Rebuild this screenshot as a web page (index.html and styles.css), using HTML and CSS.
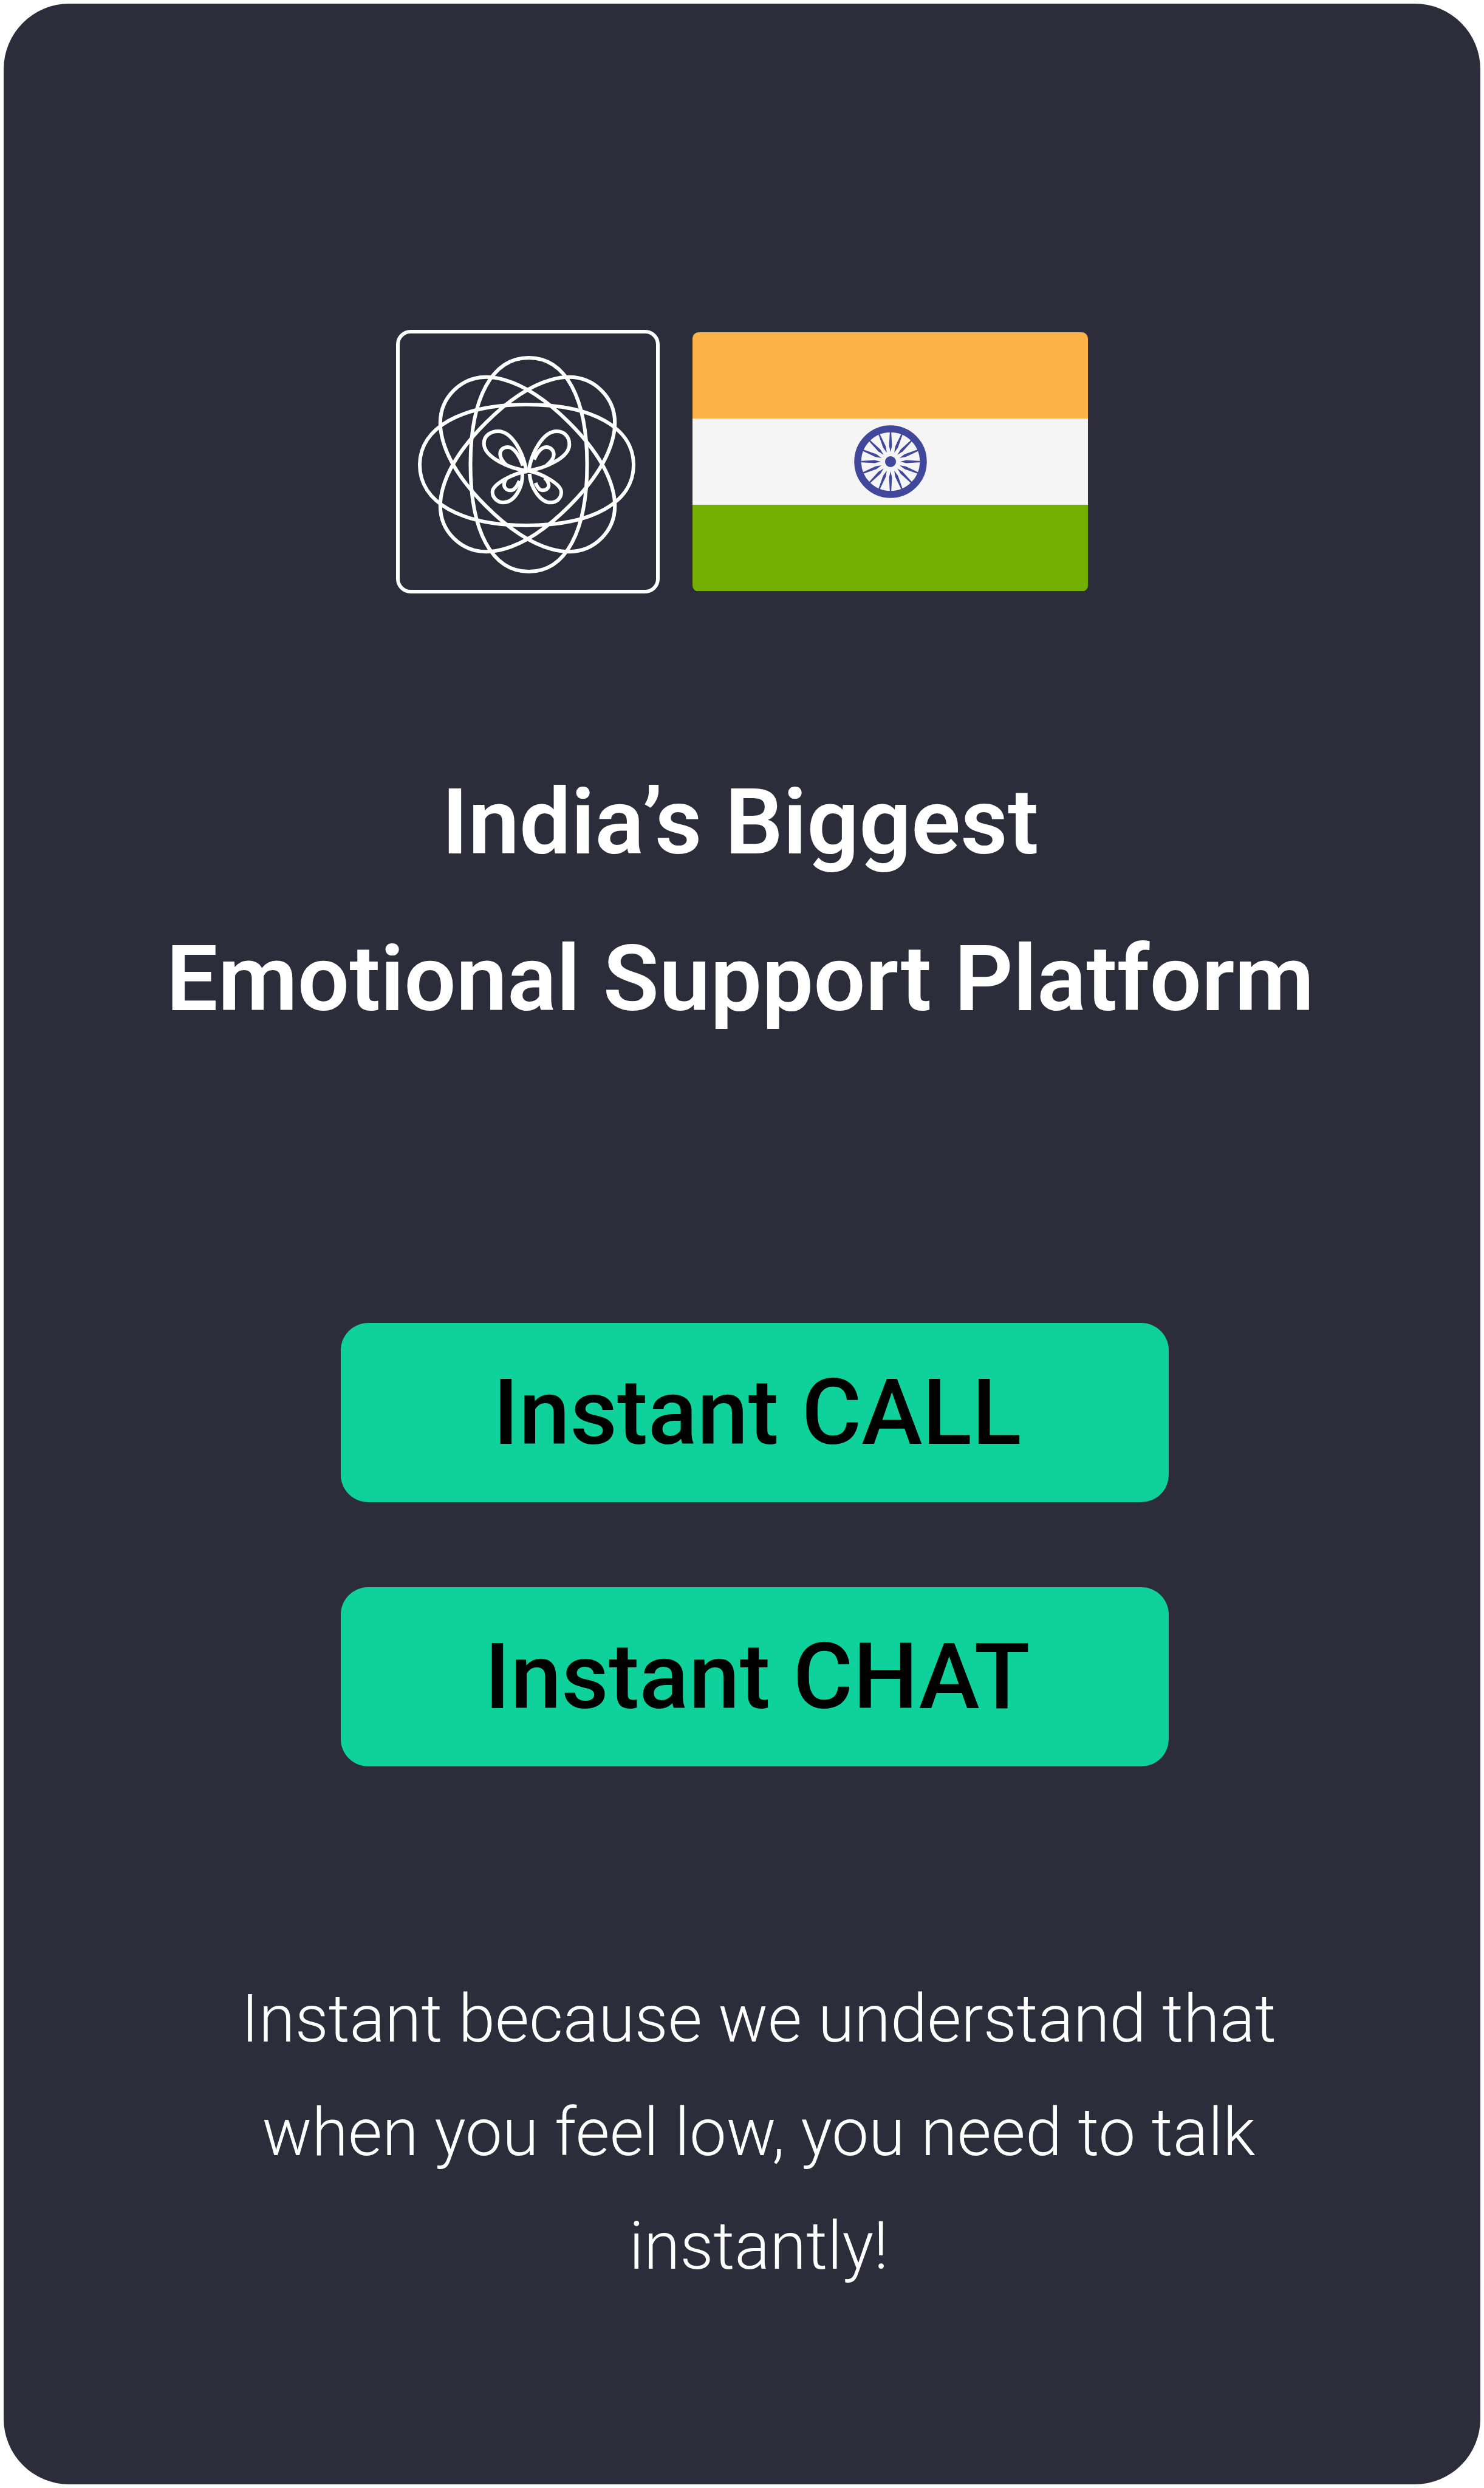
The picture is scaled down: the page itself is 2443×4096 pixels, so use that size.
FILE: index.html
```html
<!DOCTYPE html>
<html lang="en">
<head>
<meta charset="utf-8">
<title>Instant Support</title>
<link rel="stylesheet" href="styles.css">
</head>
<body>
<main class="card">
  <div class="brand">
    <div class="logo">
      <svg class="logo-art" viewBox="652 543 434 434" fill="none" stroke="#fff" stroke-width="6">
        <path transform="translate(867 765.5)" d="M-176 0C-176 -61 -109 -99.5 0 -99.5S176 -61 176 0S109 99.5 0 99.5S-176 61 -176 0Z"/>
        <path transform="translate(870.5 765)" d="M0 -176C61 -176 96 -109 96 0S61 176 0 176S-96 109 -96 0S-61 -176 0 -176Z"/>
        <path transform="translate(868.5 764.5) rotate(45)" d="M-172 0C-172 -60 -107 -97 0 -97S172 -60 172 0S107 97 0 97S-172 60 -172 0Z"/>
        <path transform="translate(868.5 764.5) rotate(-45)" d="M-172 0C-172 -60 -107 -97 0 -97S172 -60 172 0S107 97 0 97S-172 60 -172 0Z"/>
        <g transform="translate(740 640) scale(.33333)" stroke-width="18">
          <path d="M385 405C300 395 170 340 170 270C170 230 205 210 240 210C310 210 365 320 378 400"/>
          <path d="M282 378C262 360 250 340 250 322C250 300 268 288 288 288C320 288 350 340 362 380"/>
          <path d="M392 400C405 320 460 210 530 210C565 210 592 235 592 275C592 340 470 395 385 405"/>
          <path d="M418 350C432 315 455 288 478 288C500 288 515 305 515 325C515 345 500 362 480 378"/>
          <path d="M385 408C320 415 212 470 212 510C212 540 240 562 265 562C320 562 362 490 360 420"/>
          <path d="M280 445C270 460 268 470 270 480C275 497 290 503 305 502C320 500 335 480 345 455"/>
          <path d="M395 420C400 490 450 562 500 562C530 562 552 540 552 510C552 470 450 415 385 405"/>
          <path d="M425 465C435 490 445 502 460 502C478 502 490 490 490 478C490 465 480 450 470 440"/>
        </g>
      </svg>
    </div>
    <div class="flag">
      <div class="stripe stripe-saffron"></div>
      <div class="stripe stripe-white">
        <svg class="chakra" viewBox="-60 -60 120 120">
          <circle r="54" fill="none" stroke="#41479b" stroke-width="11.5"/>
          <circle r="9" fill="#41479b"/>
          <g fill="#41479b">
            <polygon id="sp" points="0,-16 2.4,-26 1.1,-50 -1.1,-50 -2.4,-26"/>
            <use href="#sp" transform="rotate(22.5)"/>
            <use href="#sp" transform="rotate(45)"/>
            <use href="#sp" transform="rotate(67.5)"/>
            <use href="#sp" transform="rotate(90)"/>
            <use href="#sp" transform="rotate(112.5)"/>
            <use href="#sp" transform="rotate(135)"/>
            <use href="#sp" transform="rotate(157.5)"/>
            <use href="#sp" transform="rotate(180)"/>
            <use href="#sp" transform="rotate(202.5)"/>
            <use href="#sp" transform="rotate(225)"/>
            <use href="#sp" transform="rotate(247.5)"/>
            <use href="#sp" transform="rotate(270)"/>
            <use href="#sp" transform="rotate(292.5)"/>
            <use href="#sp" transform="rotate(315)"/>
            <use href="#sp" transform="rotate(337.5)"/>
          </g>
        </svg>
      </div>
      <div class="stripe stripe-green"></div>
    </div>
  </div>
  <h1 class="headline">India’s Biggest<br>Emotional Support Platform</h1>
  <div class="actions">
    <a class="action" href="#">Instant CALL</a>
    <a class="action" href="#">Instant CHAT</a>
  </div>
  <p class="note">Instant because we understand that<br>when you feel low, you need to talk<br>instantly!</p>
</main>
</body>
</html>
```

FILE: styles.css
```css
* { box-sizing: border-box; }
html, body { margin: 0; background: #fff; }
body { padding: 6px; font-family: Roboto, "Liberation Sans", sans-serif; }
.card {
  height: 4084px;
  background: #2d2c3a;
  border-radius: 108px;
  padding-top: 537px;
  display: flex;
  flex-direction: column;
  align-items: center;
  color: #fff;
}
.brand { display: flex; align-items: center; gap: 54px; }
.logo {
  width: 434px;
  height: 434px;
  border: 6px solid #fff;
  border-radius: 24px;
  position: relative;
}
.logo-art { position: absolute; inset: -6px; width: 434px; height: 434px; display: block; }
.flag {
  width: 651px;
  height: 427px;
  border-radius: 10px;
  overflow: hidden;
  display: flex;
  flex-direction: column;
}
.stripe { flex: 1; display: flex; align-items: center; justify-content: center; }
.stripe-saffron { background: #fbb347; }
.stripe-white { background: #f5f5f5; }
.stripe-green { background: #73af00; }
.chakra { width: 120px; height: 120px; display: block; }
.headline {
  margin: 248px 0 0;
  font-size: 151px;
  line-height: 258px;
  font-weight: 570;
  text-align: center;
  padding-right: 6px;
}
.actions {
  margin-top: 437px;
  padding-left: 42px;
  display: flex;
  flex-direction: column;
  gap: 140px;
}
.action {
  width: 1363px;
  height: 295px;
  background: #0ed19b;
  border-radius: 45px;
  display: flex;
  align-items: center;
  justify-content: center;
  color: #000;
  font-size: 151px;
  font-weight: 500;
  text-decoration: none;
  padding-left: 8px;
}
.note {
  margin: 322px 0 0;
  padding-left: 55px;
  font-size: 108.5px;
  line-height: 187px;
  font-weight: 300;
  text-align: center;
}
```
